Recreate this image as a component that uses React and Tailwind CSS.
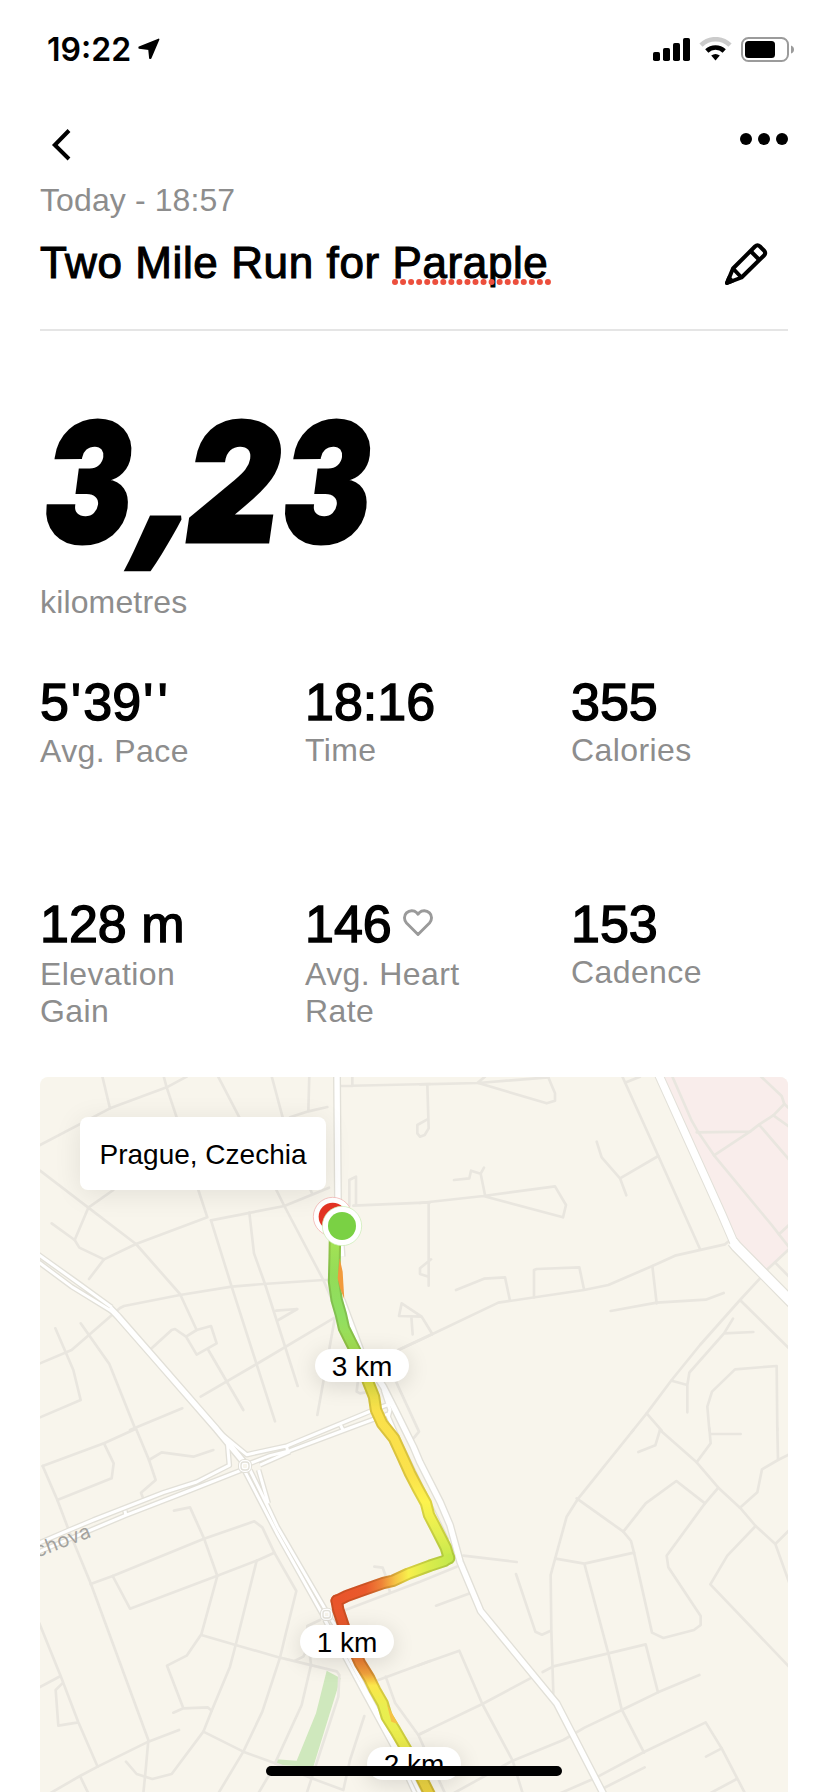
import React from 'react';

// Map tiles, each one drawn from its own origin (three units per pixel)
const TILES = [
  {
    id: 'nw',
    transform: 'translate(0 0)',
    streets: [
      'M30 225L240 115L410 52L470 20',
      'M216 15L240 115',
      'M400 15L410 52L440 142L505 360L532 442L318 522L222 568L148 533L134 510L65 460',
      'M134 510L175 413L250 360',
      'M780 142L835 124L892 111M835 124L838 15',
      'M562 15L628 142L740 362L763 408L880 630L925 735',
      'M724 15L758 142',
      'M30 302L175 413L318 522L450 672L500 780',
      'M222 568L177 627',
      'M840 356L846 370',
      'M543 451L763 408L897 353',
      'M543 451L605 650L735 1054',
      'M658 428L672 550L705 642L803 948',
      'M30 880L125 840L270 714L282 708L450 675L605 650L700 642L880 630L900 630',
      'M365 835L425 780L435 777L468 800L500 780L543 768L560 820L500 854L468 800',
      'M535 840L640 1020',
      'M512 980L680 882L915 742L862 1035',
      'M738 722L802 717L745 750',
      'M76 775L130 900L152 990L30 1042',
      'M152 760L238 882L315 1075',
      'M300 1080L457 1015',
      'M932 48L1200 42M967 15L967 48',
      'M958 407L958 330L978 320L978 405',
      'M970 407L1200 397',
      'M1107 738L1115 700L1175 740L1207 792M1107 738L1175 740M1144 740L1148 793',
      'M1105 840L1207 792',
      'M984 930L980 965L990 970L1020 965',
      'M1098 935L1167 1085L1148 1108',
    ],
  },
  {
    id: 'ne',
    transform: 'translate(1170 0)',
    streets: [
      'M0 43L175 39L385 22M172 39L195 20',
      'M175 39L380 100L405 92L405 70L382 15',
      'M22 45L26 175L14 195L0 200L-8 190L-8 165L22 148',
      'M605 15L715 258L840 537M615 38L660 20',
      'M530 215L545 262L600 325L715 258M600 325L619 376',
      'M102 330L148 325L153 302L182 311L192 293M182 311L195 375',
      'M0 399L190 378L405 349L438 405L429 442L190 378',
      'M26 398L26 647M33 568L0 595L0 612L26 620',
      'M108 660L192 626L255 622L270 692',
      'M342 682L342 600L350 597L478 592L492 658',
      'M-65 840L0 810L235 698L492 660L565 645L697 588L765 557L915 523L928 512',
      'M697 588L710 700M572 723L710 698L857 689L911 669',
      'M755 15L815 152L835 187L882 256L1055 465L1077 493L1110 535L1040 600',
      'M830 187L990 185L1018 163L1060 136L1093 102L1085 78L1018 15',
      'M882 256L990 185M1018 165L1110 272M1060 136L1110 172M1093 102L1110 118',
      'M1077 493L1110 462M1065 577L1110 623',
      'M1020 625L960 690L840 825L755 930L680 1030L635 1086M960 690L1110 838',
      'M939 746L912 790L808 908L802 945L802 1027M912 790L1000 786M755 932L802 945',
      'M680 1030L725 1082',
      'M1072 1080L1070 888L945 898L876 965L862 1010L868 1080',
    ],
  },
  {
    id: 'sw',
    transform: 'translate(0 1080)',
    streets: [
      'M38 108L222 40L318 -4L357 90L377 150L333 188L342 212',
      'M357 90L395 67L490 80L550 60',
      'M222 40L251 100L245 145L82 210',
      'M38 108L82 210L118 305L182 460L355 930L348 1010L340 1090',
      'M182 462L248 438L520 327L673 274L697 292L733 368L799 483L770 600L750 683L697 845L640 965L565 1090',
      'M248 438L300 536L560 438L680 392L733 368',
      'M432 242L480 232L522 325L562 438L514 613L470 677L411 707L460 835L430 848M460 835L533 832L545 842',
      'M680 392L617 645L600 710L545 842L520 905L425 1032L367 1047L320 1032L288 995',
      'M514 615L617 645L750 683L920 724L928 735L925 800L830 1090',
      'M520 905L640 965L735 1000L845 1045L940 1080L960 990L1003 858',
      'M28 580L92 738L145 877L203 1010M28 772L92 738M97 760L77 780L85 887L145 877',
      'M60 1090L150 1038L203 1010L355 935L447 900M150 1038L175 1090',
      'M838 660L843 705L815 825L735 1000M725 1022L685 1090',
      'M870 570L832 588L830 660L820 680L795 692',
      'M1033 410L1058 413L1068 440L1080 487',
      'M1045 750L1200 693M1067 740L1095 818L1165 915L1245 1090M1165 915L1200 898',
    ],
  },
  {
    id: 'se',
    transform: 'translate(1170 1080)',
    streets: [
      'M640 0L475 205L440 260L407 380L392 435L394 600L400 790',
      'M470 205L610 305L633 333L642 368L696 608L730 624L822 600L842 585L842 558L745 412L740 377L855 220L895 173',
      'M610 305L677 220L769 153L855 220',
      'M720 0L830 97L895 173L960 233L1007 288L1066 342L1110 298M1066 342L1110 465',
      'M655 66L706 46L720 0',
      'M868 -5L872 40L830 97M872 12L962 12',
      'M1072 -5L1074 90M960 233L1012 187L1026 118L1074 90L1110 72',
      'M1007 288L922 377L871 463L1110 713',
      'M407 386L493 401L642 368M493 401L565 670L605 838L672 968',
      'M130 377L290 396M288 432L346 605L366 614L392 602',
      'M48 527L150 490M-230 542L0 455L110 410',
      'M-5 706L118 662L187 822L278 992L308 1090',
      'M-5 914L187 822L335 743M368 726L400 709L565 670L677 643L714 787',
      'M100 1090L278 992L430 930L495 892L605 840L714 787L838 735',
      'M420 1090L528 1043L672 966L857 877L905 955L975 1090',
      'M858 980L905 955M870 1090L950 1047M540 1080L674 1012',
    ],
  },
];

// White roads, grouped by stroke width
const ROADS = [
  {
    casing: 17,
    width: 9,
    paths: [
      'M20 550L135 632L245 712M20 572L125 650L245 724',
      'M20 1422L118 1380L190 1350L400 1268L500 1236L598 1186L592 1115',
      'M20 1448L180 1381L285 1337L460 1269L640 1198',
      'M285 1322L288 1338',
      'M560 1080L650 1154L770 1128L890 1078L1030 1020L1090 998',
      'M655 1182L720 1157L780 1142L960 1074L1030 1048L1080 1030',
      'M770 1130L774 1148M932 1066L940 1082',
      'M690 1185L780 1145',
      'M590 1110L640 1172',
      'M645 1205L740 1388L880 1638',
      'M660 1200L704 1290L742 1370L890 1625',
      'M686 1200L715 1300',
      'M1060 960L1080 1020L1075 1040L1110 1120L1250 1410',
      'M905 1650L925 1680',
      'M885 1650L1000 1865L1095 2040L1155 2170',
      'M915 1680L1010 1865L1105 2040L1170 2170',
    ],
  },
  {
    casing: 24,
    width: 16,
    paths: [
      'M240 714L265 740L370 860L560 1078L640 1175',
      'M921 15L924 400L935 560',
      'M935 690L995 850L1060 950L1098 1025L1150 1130L1170 1177L1230 1295L1260 1365L1290 1475L1352 1623L1580 1900L1722 2175',
    ],
  },
  { casing: 28, width: 22, paths: ['M1882 5L2075 432L2115 525'] },
  { casing: 36, width: 29, paths: ['M2108 515L2120 530L2290 702'] },
];

// The route, start to finish, split where the direction changes
const ROUTE = [
  {
    id: 'north',
    d: 'M915 500L914 560L912 635L920 690L933 735L942 775L962 815L990 870L1018 945L1032 980L1038 1020L1056 1060L1092 1105L1115 1155L1140 1210L1165 1258L1188 1300L1197 1335L1218 1375L1247 1432L1257 1465',
    x1: 0, y1: 500, x2: 0, y2: 1470,
    stops: [['0', '#a6e354'], ['.12', '#93dc58'], ['.24', '#8fdf62'], ['.36', '#a5de50'], ['.46', '#e3df45'], ['.54', '#fae04a'], ['.74', '#fbe24c'], ['.82', '#fdf34e'], ['.92', '#e2ee50'], ['1', '#c5e94c']],
  },
  {
    id: 'cross',
    d: 'M1257 1463L1243 1473L1200 1487L1135 1511L1090 1532L1060 1539L1000 1560L950 1578L920 1593',
    x1: 1257, y1: 0, x2: 920, y2: 0,
    stops: [['0', '#c5e94c'], ['.2', '#dcec4c'], ['.36', '#f8f04c'], ['.48', '#f6c244'], ['.6', '#ee8338'], ['.74', '#ea5a2c'], ['1', '#e9542a']],
  },
  {
    id: 'south',
    d: 'M920 1592L925 1620L945 1680L990 1780L1018 1825L1035 1860L1058 1900L1070 1940L1095 1980L1130 2040L1165 2105L1200 2175',
    x1: 0, y1: 1592, x2: 0, y2: 2170,
    stops: [['0', '#e9542a'], ['.16', '#ea5a2c'], ['.3', '#ec7c33'], ['.38', '#f0a23d'], ['.44', '#fbe74a'], ['.56', '#e8ef50'], ['.76', '#ecec4c'], ['.88', '#eedc48'], ['1', '#ecd03f']],
  },
];

const PACE = (
  <>
    5<span className="ml-0.5 tracking-[2.5px]">'</span>39<span className="ml-0.5 tracking-[4.5px]">'</span>
    <span>'</span>
  </>
);

const STATS = [
  { value: PACE, label: 'Avg. Pace', labelClass: 'mt-[3px]' },
  { value: '18:16', label: 'Time', labelClass: 'mt-0.5' },
  { value: '355', label: 'Calories', labelClass: 'mt-0.5' },
  { value: '128 m', label: 'Elevation Gain', labelClass: 'mt-1 w-[150px]' },
  { value: '146', label: 'Avg. Heart Rate', labelClass: 'mt-1 w-[170px]', heart: true },
  { value: '153', label: 'Cadence', labelClass: 'mt-0.5' },
];

const KM_PINS = [
  { label: '3 km', place: 'left-[275px] top-[272px]' },
  { label: '1 km', place: 'left-[260px] top-[548px]' },
  { label: '2 km', place: 'left-[327px] top-[670px]' },
];

const StatusBar = () => (
  <div className="flex h-[100px] items-start justify-between pl-[47px] pr-[33px] pt-[30px]">
    <div className="flex items-center">
      <span className="font-['Inter',sans-serif] text-[32px] font-semibold leading-10">19:22</span>
      <svg className="ml-[7px] -mt-0.5" width="22" height="22" viewBox="0 0 22 22" stroke="#000" strokeWidth="1.6" strokeLinejoin="round">
        <path d="M20.600 1.400L12.600 20.200L11.900 20.200L11 11.200L1.200 9.900L1.200 9.200Z" />
      </svg>
    </div>
    <div className="flex items-start pt-[7px]">
      {/* Signal strength */}
      <svg width="38" height="25" viewBox="0 0 38 25">
        <rect x="0" y="15" width="7" height="9" rx="1.800" />
        <rect x="10" y="11" width="7" height="13" rx="1.800" />
        <rect x="20" y="6" width="7" height="18" rx="1.800" />
        <rect x="30" y="1" width="7" height="23" rx="1.800" />
      </svg>
      {/* Wi-Fi */}
      <svg className="ml-[8.500px]" width="33" height="25" viewBox="0 0 33 25">
        <path d="M2 8.200A20.500 20.500 0 0 1 31 8.200" fill="none" stroke="#cbcbcb" strokeWidth="4.600" />
        <path d="M7.800 14A12.500 12.500 0 0 1 25.200 14" fill="none" stroke="#000" strokeWidth="4.600" />
        <path d="M12.200 18.600Q16.500 15.400 20.800 18.600L16.500 23.500Z" />
      </svg>
      {/* Battery */}
      <svg className="ml-[9px]" width="54" height="26" viewBox="0 0 54 26">
        <rect x="1" y="1" width="46" height="23" rx="6.500" fill="none" stroke="#9b9b9b" strokeWidth="2" />
        <rect x="4" y="4" width="30" height="17" rx="3.500" />
        <path d="M50 8.500Q53 9.500 53 12.500T50 16.500Z" fill="#9b9b9b" />
      </svg>
    </div>
  </div>
);

const NavBar = () => (
  <div className="flex h-20 items-start justify-between pl-[51px] pr-10 pt-7">
    <svg width="20" height="34" viewBox="0 0 20 34" fill="none" stroke="#000" strokeWidth="4">
      <path d="M18 2.500L3.800 17L18 31" />
    </svg>
    <svg className="mt-[5px]" width="48" height="12" viewBox="0 0 48 12">
      <circle cx="6" cy="6" r="6" />
      <circle cx="24" cy="6" r="6" />
      <circle cx="42" cy="6" r="6" />
    </svg>
  </div>
);

const PencilIcon = () => (
  <svg width="44" height="44" viewBox="0 0 44 44" fill="none" stroke="#000" strokeWidth="4" strokeLinejoin="round">
    <path d="M3 41L9 26.500L31 4.500Q33.500 2 36 4.500L40 8.500Q42.500 11 40 13.500L17.500 35.500Z" />
    <path d="M9 26.500L17.500 35.500M26.500 9L35.500 18" />
    <path d="M3 41L5 36L8 39Z" fill="#000" />
  </svg>
);

const Stat = ({ value, label, labelClass, heart }) => (
  <div className="h-[222px]">
    <div className="flex items-start">
      <span className="whitespace-nowrap text-[52px] leading-[56px] [-webkit-text-stroke:1.4px_#000]">{value}</span>
      {heart && (
        <svg className="ml-[11px] mt-[13px]" width="30" height="28" viewBox="0 0 30 28" fill="none" stroke="#9a9a9a" strokeWidth="2.900" strokeLinejoin="round">
          <path d="M15 25.500L3.500 14C.8 11 .8 6.500 3.500 3.900C6.500 1 11 1 13.500 3.600L15 5.200L16.500 3.600C19 1 23.500 1 26.500 3.900C29.200 6.500 29.200 11 26.500 14Z" />
        </svg>
      )}
    </div>
    <p className={`text-[32px] leading-[37px] tracking-[0.4px] text-[#8d8d8d] ${labelClass}`}>{label}</p>
  </div>
);

const MapDrawing = () => (
  <svg className="block" width="748" height="715" viewBox="30 21 2244 2145" fill="none" strokeLinejoin="round">
    <defs>
      {ROUTE.map((part) => (
        <linearGradient key={part.id} id={`route-${part.id}`} gradientUnits="userSpaceOnUse" x1={part.x1} y1={part.y1} x2={part.x2} y2={part.y2}>
          {part.stops.map(([offset, color]) => (
            <stop key={offset} offset={offset} stopColor={color} />
          ))}
        </linearGradient>
      ))}
    </defs>

    {/* Hospital area and park */}
    <path d="M1890 15L2075 432L2120 520L2210 600L2280 530V15Z" fill="#f9edeb" />
    <path d="M890 1802L932 1825L850 2090L735 2085L738 2068L800 2072L858 1930Z" fill="#cfe8bd" />

    <g stroke="#e9e6df" strokeWidth="8" strokeLinecap="round">
      {TILES.map((tile) => (
        <g key={tile.id} transform={tile.transform}>
          {tile.streets.map((d) => (
            <path key={d} d={d} />
          ))}
        </g>
      ))}
    </g>

    {/* All casings first, so that crossings stay open */}
    {ROADS.map((road) => (
      <path key={road.casing} d={road.paths.join('')} stroke="#e2e0d8" strokeWidth={road.casing} />
    ))}
    {ROADS.map((road) => (
      <path key={road.width} d={road.paths.join('')} stroke="#fff" strokeWidth={road.width} />
    ))}
    <rect x="633" y="1176" width="24" height="24" rx="9" fill="#f8f5ec" stroke="#e2e0d8" strokeWidth="18" />
    <rect x="633" y="1176" width="24" height="24" rx="9" fill="#f8f5ec" stroke="#fff" strokeWidth="12" />
    <rect x="633" y="1176" width="24" height="24" rx="9" stroke="#e2e0d8" strokeWidth="4" />
    <rect x="879" y="1622" width="22" height="22" rx="7" fill="#f8f5ec" stroke="#e2e0d8" strokeWidth="18" />
    <rect x="879" y="1622" width="22" height="22" rx="7" fill="#f8f5ec" stroke="#fff" strokeWidth="12" />
    <rect x="879" y="1622" width="22" height="22" rx="7" stroke="#e2e0d8" strokeWidth="4" />

    <text transform="translate(22 1463) rotate(-21)" fill="#a3a29e" fontSize="60" letterSpacing="1" fontFamily="Inter, sans-serif">chova</text>

    {ROUTE.map((part) => (
      <path key={part.id} d={part.d} stroke={`url(#route-${part.id})`} strokeWidth="37" strokeLinecap="round" />
    ))}
    <path d={ROUTE.map((part) => part.d).join('')} stroke="#3d3000" strokeOpacity=".17" strokeWidth="37" strokeLinecap="round" />
    {ROUTE.map((part) => (
      <path key={part.id} d={part.d} stroke={`url(#route-${part.id})`} strokeWidth="25" strokeLinecap="round" />
    ))}
    {/* First lap showing beside the last one */}
    <path d="M929 565L938 605L940 640L943 688L930 655L923 625L926 590Z" fill="#f29a3c" />
    <path d="M1070 1900L1084 1955L1104 1962Z" fill="#f5c244" />

    {/* Finish and start */}
    <circle cx="908" cy="440" r="58" fill="#fff" stroke="#f0a8a4" strokeWidth="2" />
    <circle cx="908" cy="440" r="42" fill="#e23323" />
    <circle cx="936" cy="468" r="59" fill="#fff" stroke="#c5ecae" strokeWidth="2" />
    <circle cx="936" cy="468" r="42" fill="#7ad144" />
  </svg>
);

const RunMap = () => (
  <div className="relative mx-10 h-[715px] shrink-0 overflow-hidden rounded-t-lg bg-[#f8f5ec]">
    <MapDrawing />
    <div className="absolute left-10 top-10 flex h-[73px] w-[246px] items-center justify-center rounded-lg bg-white pt-0.5 shadow-[0_4px_28px_rgba(0,0,0,0.09)]">
      <span className="whitespace-nowrap text-[28px]">Prague, Czechia</span>
    </div>
    {KM_PINS.map((pin) => (
      <div
        key={pin.label}
        className={`absolute flex h-[33px] w-[94px] items-center justify-center rounded-full bg-white pt-0.5 text-[28px] shadow-[0_4px_22px_rgba(0,0,0,0.13)] ${pin.place}`}
      >
        {pin.label}
      </div>
    ))}
  </div>
);

export default function App() {
  return (
    <div className="relative flex h-[1792px] w-[828px] flex-col overflow-hidden bg-white font-['Liberation_Sans',Arial,sans-serif] text-black">
      <StatusBar />
      <NavBar />

      <header className="mx-10 h-[151px] shrink-0 border-b-2 border-[#e5e5e5]">
        <p className="text-[32px] leading-10 tracking-[0.1px] text-[#8d8d8d]">Today - 18:57</p>
        <div className="mt-[17px] flex items-start justify-between pr-5">
          <h1 className="flex text-[44px] leading-[52px] tracking-[0.6px] [-webkit-text-stroke:1.1px_#000]">
            <span className="whitespace-pre">Two Mile Run for </span>
            <span className="relative">
              Paraple
              {/* Spell check dots */}
              <svg className="absolute -left-px top-[42px]" width="160" height="6" viewBox="0 0 160 6">
                <path d="M3 3H158" stroke="#ec4f3d" strokeWidth="6" strokeLinecap="round" strokeDasharray="0 8.050" />
              </svg>
            </span>
          </h1>
          <div className="mt-[5px]">
            <PencilIcon />
          </div>
        </div>
      </header>

      <section className="mx-10 mt-[66px] h-[277px] shrink-0">
        <div className="h-[185px]">
          <span className="ml-1 inline-block origin-left scale-x-[0.8] whitespace-nowrap font-['Inter',sans-serif] text-[165px] font-black italic leading-[170px] [-webkit-text-stroke:3px_#000]">
            <span className="tracking-[27px]">3</span>
            <span className="inline-block -skew-x-12 font-['Open_Sans',sans-serif] text-[216px] font-extrabold leading-[110px] tracking-[-26px]">,</span>
            <span className="inline-block origin-left scale-x-110 tracking-[14px]">2</span>
            <span>3</span>
          </span>
        </div>
        <p className="text-[32px] leading-10 tracking-[0.15px] text-[#8d8d8d]">kilometres</p>
      </section>

      <section className="ml-10 grid h-[403px] shrink-0 grid-cols-[265px_266px_auto] content-start">
        {STATS.map((stat) => (
          <Stat key={stat.label} {...stat} />
        ))}
      </section>

      <RunMap />

      {/* Home indicator */}
      <div className="absolute bottom-4 left-[266px] h-2.5 w-[296px] rounded-full bg-black" />
    </div>
  );
}
